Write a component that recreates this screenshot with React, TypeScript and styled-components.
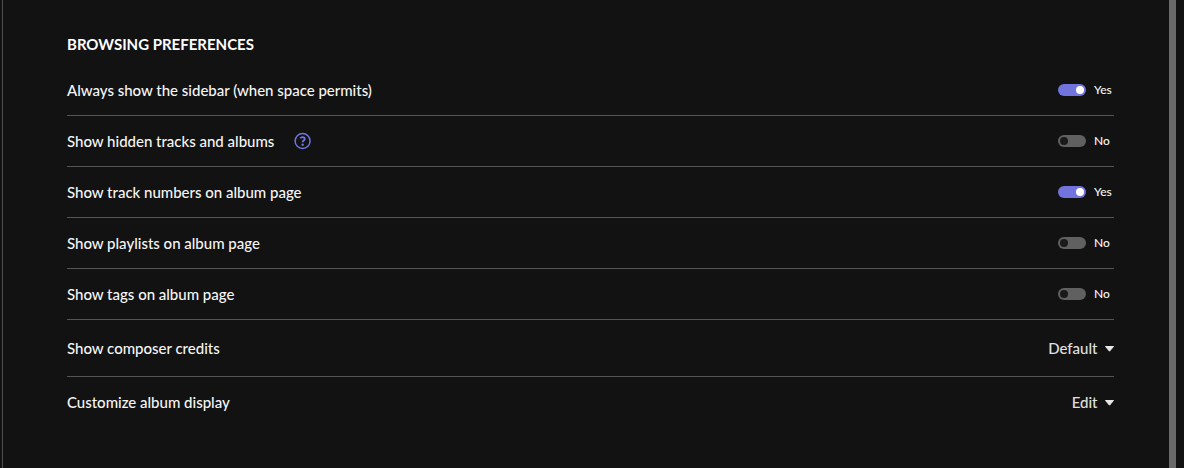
import React from "react";
import styled, { createGlobalStyle } from "styled-components";

const GlobalStyle = createGlobalStyle`
  * { box-sizing: border-box; }
  body { margin: 0; background: #121212; overflow: hidden; }
`;

const Page = styled.div`
  display: flex;
  height: 468px;
  background: #121212;
  color: #f6f6f6;
  font-family: Lato, "Liberation Sans", sans-serif;
  font-size: 15px;
  font-weight: 500;
`;

const LeftEdge = styled.div`
  flex: none;
  width: 3px;
  border-right: 1px solid #4e4e4e;
`;

const Panel = styled.main`
  flex: 1;
  padding: 34px 55px 0 64px;
`;

const Scrollbar = styled.div`
  flex: none;
  width: 7px;
  margin-right: 8px;
  background: #696969;
`;

const Heading = styled.h2`
  margin: 0 0 10px;
  color: #fff;
  font-size: 15px;
  line-height: 21px;
  font-weight: 700;
`;

const Row = styled.div<{ $height: number; $last?: boolean }>`
  display: flex;
  align-items: center;
  justify-content: space-between;
  height: ${(p) => p.$height}px;
  border-bottom: ${(p) => (p.$last ? "none" : "1px solid #555")};
`;

const Label = styled.div`
  display: flex;
  align-items: center;
  gap: 20px;
  letter-spacing: -0.01px;
`;

const Setting = styled.div`
  display: flex;
  align-items: center;
  gap: 8px;
  width: 56px;
  font-size: 12px;
  line-height: 14px;
`;

const State = styled.span`
  padding-bottom: 1px;
`;

const Track = styled.span<{ $on: boolean }>`
  display: flex;
  align-items: center;
  justify-content: ${(p) => (p.$on ? "flex-end" : "flex-start")};
  width: 28px;
  height: 12px;
  padding: 0 2px;
  border-radius: 6px;
  background: ${(p) => (p.$on ? "#7074dc" : "#606060")};
`;

const Knob = styled.span<{ $on: boolean }>`
  width: 8px;
  height: 8px;
  border-radius: 50%;
  background: ${(p) => (p.$on ? "#fff" : "#1a1a1a")};
`;

const Select = styled.div`
  display: flex;
  align-items: center;
  gap: 7.5px;
  color: #e0e0e0;
`;

const HelpIcon = () => (
  <svg width="18" height="18" viewBox="0 0 18 18" fill="none" stroke="#7074dc">
    <circle cx="8.6" cy="9" r="7.5" strokeWidth="1.5" />
    <path d="M6.2 6.3C6.8 5.5 7.6 5.1 8.5 5.1c1.3 0 2.2.7 2.2 1.8 0 1.7-2.1 1.6-2.1 3.4" strokeWidth="1.9" />
    <circle cx="8.6" cy="12.7" r="1.2" fill="#7074dc" stroke="none" />
  </svg>
);

const CaretSvg = styled.svg`
  margin-top: 1px;
`;

const Caret = () => (
  <CaretSvg width="9" height="6" viewBox="0 0 9 6">
    <path d="M0.5 0.5h8L4.5 5.2z" fill="#e8e8e8" stroke="#e8e8e8" strokeLinejoin="round" />
  </CaretSvg>
);

const toggles = [
  { label: "Always show the sidebar (when space permits)", on: true },
  { label: "Show hidden tracks and albums", on: false, help: true },
  { label: "Show track numbers on album page", on: true },
  { label: "Show playlists on album page", on: false },
  { label: "Show tags on album page", on: false },
];

export default function App() {
  return (
    <Page>
      <GlobalStyle />
      <LeftEdge />
      <Panel>
        <Heading>BROWSING PREFERENCES</Heading>
        {toggles.map((t) => (
          <Row key={t.label} $height={51}>
            <Label>
              {t.label}
              {t.help && <HelpIcon />}
            </Label>
            <Setting>
              <Track $on={t.on}>
                <Knob $on={t.on} />
              </Track>
              <State>{t.on ? "Yes" : "No"}</State>
            </Setting>
          </Row>
        ))}
        <Row $height={57}>
          <Label>Show composer credits</Label>
          <Select>
            Default
            <Caret />
          </Select>
        </Row>
        <Row $height={50} $last>
          <Label>Customize album display</Label>
          <Select>
            Edit
            <Caret />
          </Select>
        </Row>
      </Panel>
      <Scrollbar />
    </Page>
  );
}
